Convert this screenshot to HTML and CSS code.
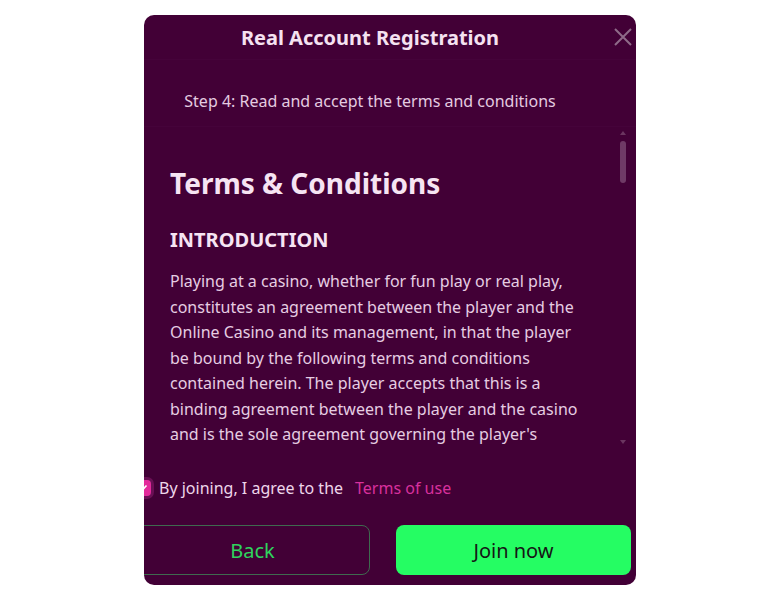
FILE: index.html
```html
<!DOCTYPE html>
<html lang="en">
<head>
<meta charset="utf-8">
<title>Real Account Registration</title>
<link rel="stylesheet" href="styles.css">
</head>
<body>
<div class="modal">
  <div class="header">
    <h2 class="title">Real Account Registration</h2>
    <button class="close" aria-label="Close">
      <svg width="18" height="18" viewBox="0 0 18 18"><path d="M1 1L17 17M17 1L1 17" stroke="#8f6a89" stroke-width="2" fill="none"/></svg>
    </button>
  </div>
  <div class="step">Step 4: Read and accept the terms and conditions</div>
  <div class="scroll">
    <div class="content">
      <h1 class="doc-title">Terms &amp; Conditions</h1>
      <h3 class="doc-sub">INTRODUCTION</h3>
      <p class="doc-text">Playing at a casino, whether for fun play or real play, constitutes an agreement between the player and the Online Casino and its management, in that the player be bound by the following terms and conditions contained herein. The player accepts that this is a binding agreement between the player and the casino and is the sole agreement governing the player's</p>
    </div>
    <div class="bar">
      <span class="arrow up"></span>
      <div class="track"><div class="thumb"></div></div>
      <span class="arrow down"></span>
    </div>
  </div>
  <div class="footer">
    <label class="agree">
      <span class="check"><svg width="10" height="10" viewBox="0 0 10 10"><path d="M1.5 5.2L4 7.5L8.5 2.5" stroke="#fff" stroke-width="1.6" fill="none"/></svg></span>
      <span class="agree-text">By joining, I agree to the</span>
      <a class="terms">Terms of use</a>
    </label>
    <div class="buttons">
      <button class="btn back">Back</button>
      <button class="btn join">Join now</button>
    </div>
  </div>
</div>
</body>
</html>
```
FILE: styles.css
```css
* { box-sizing: border-box; }
body {
  margin: 0;
  background: #ffffff;
  font-family: "Noto Sans", "Open Sans", sans-serif;
}
.modal {
  width: 492px;
  height: 570px;
  margin: 15px auto 0;
  background: #420036;
  border-radius: 10px;
  overflow: hidden;
  display: flex;
  flex-direction: column;
  color: #f3dcef;
}
.header {
  position: relative;
  height: 45px;
  display: flex;
  align-items: center;
  justify-content: center;
  padding-right: 40px;
  border-bottom: 1px solid #45033a;
}
.title {
  margin: 0;
  font-size: 20px;
  font-weight: 700;
  color: #f5e2f1;
}
.close {
  position: absolute;
  right: 4px;
  top: 13px;
  background: none;
  border: 0;
  padding: 0;
  width: 18px;
  height: 18px;
}
.step {
  height: 67px;
  display: flex;
  align-items: center;
  justify-content: center;
  padding: 16px 40px 0 0;
  font-size: 16px;
  color: #e4cbe0;
  border-bottom: 1px solid #45033a;
}
.scroll {
  height: 323px;
  display: flex;
}
.content {
  flex: 1;
  padding: 36px 27px 0 26px;
  overflow: hidden;
}
.doc-title {
  margin: 0 0 22px;
  font-size: 28px;
  font-weight: 700;
  line-height: 40px;
  color: #f6e4f3;
}
.doc-sub {
  margin: 0 0 14px;
  font-size: 20px;
  font-weight: 700;
  line-height: 30px;
  color: #f6e4f3;
}
.doc-text {
  margin: 0;
  font-size: 16px;
  line-height: 25.5px;
  color: #e6cde2;
}
.bar {
  width: 22px;
  display: flex;
  flex-direction: column;
  align-items: center;
  padding: 4px 5px 6px 0;
}
.arrow {
  width: 0;
  height: 0;
  border-left: 3px solid transparent;
  border-right: 3px solid transparent;
}
.arrow.up { border-bottom: 4px solid #6b3560; }
.arrow.down { border-top: 4px solid #6b3560; }
.track {
  flex: 1;
  padding-top: 6px;
}
.thumb {
  width: 6px;
  height: 42px;
  border-radius: 3px;
  background: #6f3a66;
}
.footer {
  flex: 1;
  margin-left: -9px;
  padding: 24px 5px 10px 0;
  display: flex;
  flex-direction: column;
  justify-content: space-between;
}
.agree {
  display: flex;
  align-items: center;
  height: 28px;
  font-size: 16px;
}
.check {
  width: 16px;
  height: 16px;
  border-radius: 4px;
  background: #e32a9b;
  box-shadow: 0 0 0 3px #6a0f55;
  display: flex;
  align-items: center;
  justify-content: center;
  margin-right: 8px;
}
.agree-text { color: #eed6ea; }
.terms {
  margin-left: 12px;
  color: #d8309d;
}
.buttons {
  display: flex;
  gap: 26px;
}
.btn {
  width: 235px;
  height: 50px;
  border-radius: 8px;
  font-family: inherit;
  font-size: 20px;
}
.back {
  background: transparent;
  border: 1px solid #3f6a4f;
  color: #2fd45d;
}
.join {
  background: #25fd63;
  border: 0;
  color: #151515;
}
```
